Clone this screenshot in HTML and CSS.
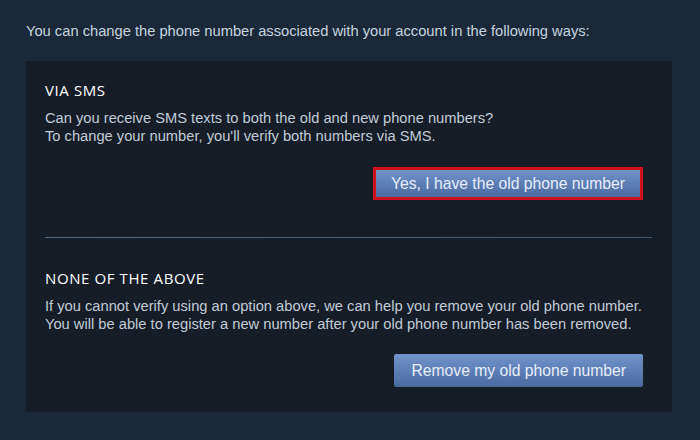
FILE: index.html
```html
<!DOCTYPE html>
<html>
<head>
<meta charset="utf-8">
<title>Change phone number</title>
<link rel="stylesheet" href="styles.css">
</head>
<body>
<div class="page">
    <p class="intro">You can change the phone number associated with your account in the following ways:</p>
    <div class="panel">
        <div class="option">
            <h2>VIA SMS</h2>
            <p>Can you receive SMS texts to both the old and new phone numbers?<br>
            To change your number, you'll verify both numbers via SMS.</p>
            <div class="actions">
                <a class="btn btn-marked" href="###">Yes, I have the old phone number</a>
            </div>
        </div>
        <div class="divider"></div>
        <div class="option option-last">
            <h2>NONE OF THE ABOVE</h2>
            <p>If you cannot verify using an option above, we can help you remove your old phone number.<br>
            You will be able to register a new number after your old phone number has been removed.</p>
            <div class="actions">
                <a class="btn" href="###">Remove my old phone number</a>
            </div>
        </div>
    </div>
</div>
</body>
</html>
```
FILE: styles.css
```css
html, body {
    margin: 0;
    padding: 0;
    background-color: #1b2838;
}
body {
    font-family: "Liberation Sans", Arial, sans-serif;
    font-size: 14.7px;
}
p, h2 {
    margin: 0;
}
.page {
    width: 700px;
    height: 440px;
    padding: 22px 28px 0 26px;
    box-sizing: border-box;
}
.intro {
    color: #c6d4df;
    line-height: 18px;
}
.panel {
    margin-top: 21px;
    height: 351px;
    box-sizing: border-box;
    background-color: #161d27;
    padding: 20px 20px 0 19px;
}
.option h2 {
    font-family: "Open Sans", "Noto Sans", sans-serif;
    font-weight: 500;
    font-size: 15px;
    line-height: 18px;
    letter-spacing: 0.6px;
    color: #ffffff;
}
.option p {
    margin-top: 10px;
    line-height: 18px;
    color: #c1cbd6;
}
.actions {
    display: flex;
    justify-content: flex-end;
    padding-right: 9px;
    margin-top: 22px;
}
.option-last .actions {
    margin-top: 21px;
}
.btn {
    display: block;
    height: 33px;
    line-height: 33px;
    padding: 0 17px;
    box-sizing: border-box;
    font-size: 15.7px;
    color: #e6eef8;
    text-decoration: none;
    border-radius: 2px;
    background: linear-gradient(to bottom, #7193ca 0%, #5c7fb6 50%, #4a6a9e 100%);
}
.btn-marked {
    line-height: 27px;
    padding: 0 15px;
    border: 3px solid #d0101a;
    border-radius: 0;
}
.divider {
    height: 1px;
    margin-top: 37px;
    background: linear-gradient(to right, #4d6a86, #3b5570);
}
.option-last {
    padding-top: 31px;
}
```
